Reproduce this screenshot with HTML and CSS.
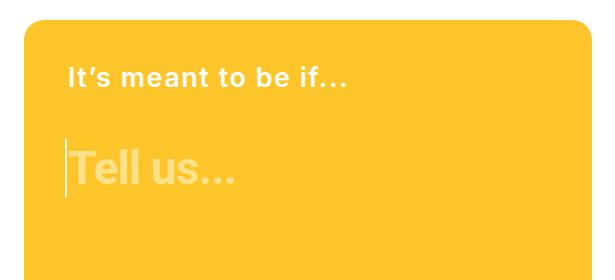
FILE: index.html
```html
<!DOCTYPE html>
<html lang="en">
<head>
  <meta charset="UTF-8" />
  <meta name="viewport" content="width=device-width, initial-scale=1.0" />
  <title>It's meant to be if...</title>
  <link rel="stylesheet" href="styles.css">
</head>
<body>
  <main class="prompt-card">
    <h2 class="prompt-title">It’s meant to be if...</h2>
    <div class="answer">
      <span class="caret"></span>
      <textarea class="answer-input" placeholder="Tell us..." rows="2"></textarea>
    </div>
  </main>
</body>
</html>
```

FILE: styles.css
```css
* {
  box-sizing: border-box;
  margin: 0;
  padding: 0;
}

body {
  font-family: 'Inter', 'Liberation Sans', sans-serif;
  background-color: #fff;
  padding: 20px 23px 0 24px;
  overflow: hidden;
}

.prompt-card {
  background: #fec52b;
  border-radius: 20px;
  height: 320px;
  padding: 42px 40px 0 44px;
}

.prompt-title {
  color: #fff;
  font-size: 27px;
  font-weight: 600;
  line-height: 32px;
  letter-spacing: 1.5px;
}

.answer {
  position: relative;
  margin-top: 44px;
}

.answer-input {
  display: block;
  width: 100%;
  border: none;
  outline: none;
  resize: none;
  background: transparent;
  font-family: 'Roboto', 'Liberation Sans', sans-serif;
  font-size: 46px;
  font-weight: 700;
  line-height: 60px;
  letter-spacing: -0.8px;
  color: #fff;
  caret-color: transparent;
}

.answer-input::placeholder {
  color: #fde08a;
  opacity: 1;
}

.caret {
  position: absolute;
  left: -3px;
  top: 0;
  width: 2px;
  height: 60px;
  background: #fff6d6;
}
```
